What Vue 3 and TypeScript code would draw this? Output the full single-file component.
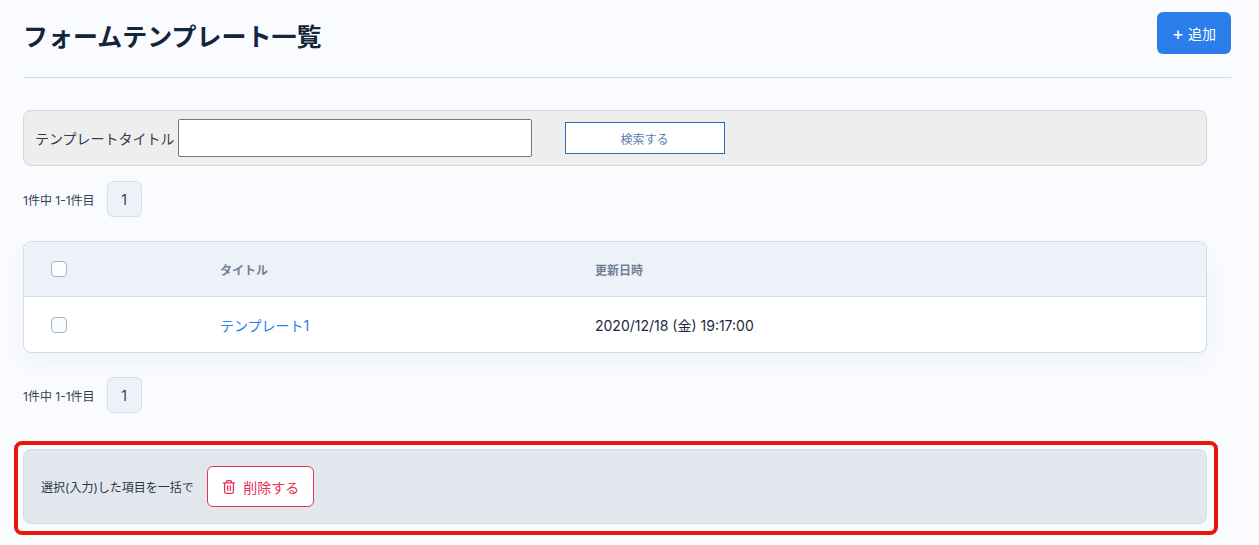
<script setup lang="ts">
interface Row { title: string; updated: string }
const rows: Row[] = [{ title: 'テンプレート1', updated: '2020/12/18 (金) 19:17:00' }]
</script>

<template>
  <main class="page">
    <header class="head">
      <h1>フォームテンプレート一覧</h1>
      <button class="add"><span class="plus">+</span> 追加</button>
    </header>
    <section class="content">
      <form class="search" @submit.prevent>
        <label for="t">テンプレートタイトル</label>
        <input id="t" type="text" />
        <button class="find">検索する</button>
      </form>
      <div class="pager first">
        <span>1件中 1-1件目</span>
        <span class="num">1</span>
      </div>
      <div class="table">
        <div class="row th">
          <div class="c1"><span class="check"></span></div>
          <div class="c2">タイトル</div>
          <div class="c3">更新日時</div>
        </div>
        <div v-for="r in rows" :key="r.title" class="row td">
          <div class="c1"><span class="check"></span></div>
          <div class="c2"><a href="#">{{ r.title }}</a></div>
          <div class="c3">{{ r.updated }}</div>
        </div>
      </div>
      <div class="pager second">
        <span>1件中 1-1件目</span>
        <span class="num">1</span>
      </div>
    </section>
    <div class="frame">
      <div class="bulk">
        <span>選択(入力)した項目を一括で</span>
        <button class="del">
          <svg width="16" height="16" viewBox="0 0 16 16" fill="none" stroke="currentColor" stroke-width="1.3" stroke-linecap="round" stroke-linejoin="round">
            <path d="M2.3 3.8h11.4M5.6 3.8V2.6c0-.5.4-.9.9-.9h3c.5 0 .9.4.9.9v1.2M3.6 3.8v9c0 .9.6 1.5 1.5 1.5h5.8c.9 0 1.5-.6 1.5-1.5v-9M6.6 6.8v4.6M9.4 6.8v4.6" />
          </svg>
          削除する
        </button>
      </div>
    </div>
  </main>
</template>

<style scoped>
.page {
  box-sizing: border-box;
  width: 1259px;
  height: 545px;
  overflow: hidden;
  padding: 12px 28px 0 23px;
  background: #f9fbfe;
  color: #1e293b;
  font-family: Inter, "Noto Sans CJK JP", sans-serif;
}
button { font-family: inherit; cursor: pointer; }
.head {
  height: 66px;
  box-sizing: border-box;
  display: flex;
  justify-content: space-between;
  align-items: flex-start;
  border-bottom: 1px solid #cbdcec;
}
h1 {
  margin: 0;
  padding-top: 6px;
  font-size: 25px;
  line-height: 38px;
  font-weight: 700;
  color: #14243a;
}
.add {
  width: 74px;
  height: 42px;
  border: 0;
  border-radius: 6px;
  background: #2b7de9;
  color: #fff;
  font-size: 14px;
  padding: 0;
}
.plus { font-size: 18px; line-height: 18px; vertical-align: -1px; }
.content { width: 1184px; }
.search {
  box-sizing: border-box;
  height: 56px;
  margin-top: 32px;
  display: flex;
  align-items: center;
  padding: 0 11px;
  background: #eeeeee;
  border: 1px solid #d6d6d6;
  border-radius: 8px;
}
label { font-size: 14px; color: #333c4a; margin-right: 3px; }
input {
  box-sizing: border-box;
  width: 354px;
  height: 38px;
  margin: 0;
  background: #fff;
  border: 1px solid #767676;
  border-radius: 2px;
}
.find {
  box-sizing: border-box;
  width: 160px;
  height: 32px;
  margin-left: 33px;
  background: #fff;
  border: 1px solid #2b6cb0;
  color: #5a7fb5;
  font-size: 12px;
  padding: 0;
}
.pager {
  display: flex;
  align-items: center;
  gap: 12px;
  font-size: 12px;
  color: #334155;
}
.first { margin-top: 15px; }
.second { margin-top: 24px; }
.num {
  box-sizing: border-box;
  width: 35px;
  height: 36px;
  display: flex;
  align-items: center;
  justify-content: center;
  background: #edf2f9;
  border: 1px solid #d5dfec;
  border-radius: 6px;
  font-size: 14px;
}
.table {
  margin-top: 24px;
  box-sizing: border-box;
  height: 112px;
  background: #fff;
  border: 1px solid #cfdcec;
  border-radius: 8px;
  overflow: hidden;
  box-shadow: 0 10px 24px rgba(30, 60, 110, 0.05);
}
.row { display: flex; align-items: center; }
.th {
  height: 55px;
  background: #edf2f9;
  border-bottom: 1px solid #cfdcec;
  box-sizing: border-box;
  font-size: 12px;
  font-weight: 700;
  color: #718096;
}
.td { height: 55px; font-size: 14px; color: #1e293b; }
.c1 { width: 196px; padding-left: 27px; box-sizing: border-box; display: flex; }
.c2 { width: 375px; }
.check {
  box-sizing: border-box;
  width: 16px;
  height: 16px;
  background: #fff;
  border: 1px solid #a0b4d0;
  border-radius: 4px;
}
.td .check { background: #f9fbfe; }
a { color: #3182ce; text-decoration: none; color: #2b7de9; }
.frame {
  box-sizing: border-box;
  width: 1204px;
  height: 94px;
  margin: 28px 0 0 -9px;
  padding: 4px 7px 7px 5px;
  border: 4px solid #e8170c;
  border-radius: 8px;
}
.bulk {
  box-sizing: border-box;
  height: 75px;
  display: flex;
  align-items: center;
  gap: 13px;
  padding-left: 17px;
  background: #e2e7ee;
  border: 1px solid #cfdcec;
  border-radius: 8px;
  font-size: 12px;
  color: #2d3748;
}
.del {
  box-sizing: border-box;
  width: 107px;
  height: 41px;
  display: flex;
  align-items: center;
  justify-content: center;
  gap: 6px;
  padding: 0;
  background: #fff;
  border: 1px solid #e8305a;
  border-radius: 6px;
  color: #e8305a;
  font-size: 14px;
}
</style>
